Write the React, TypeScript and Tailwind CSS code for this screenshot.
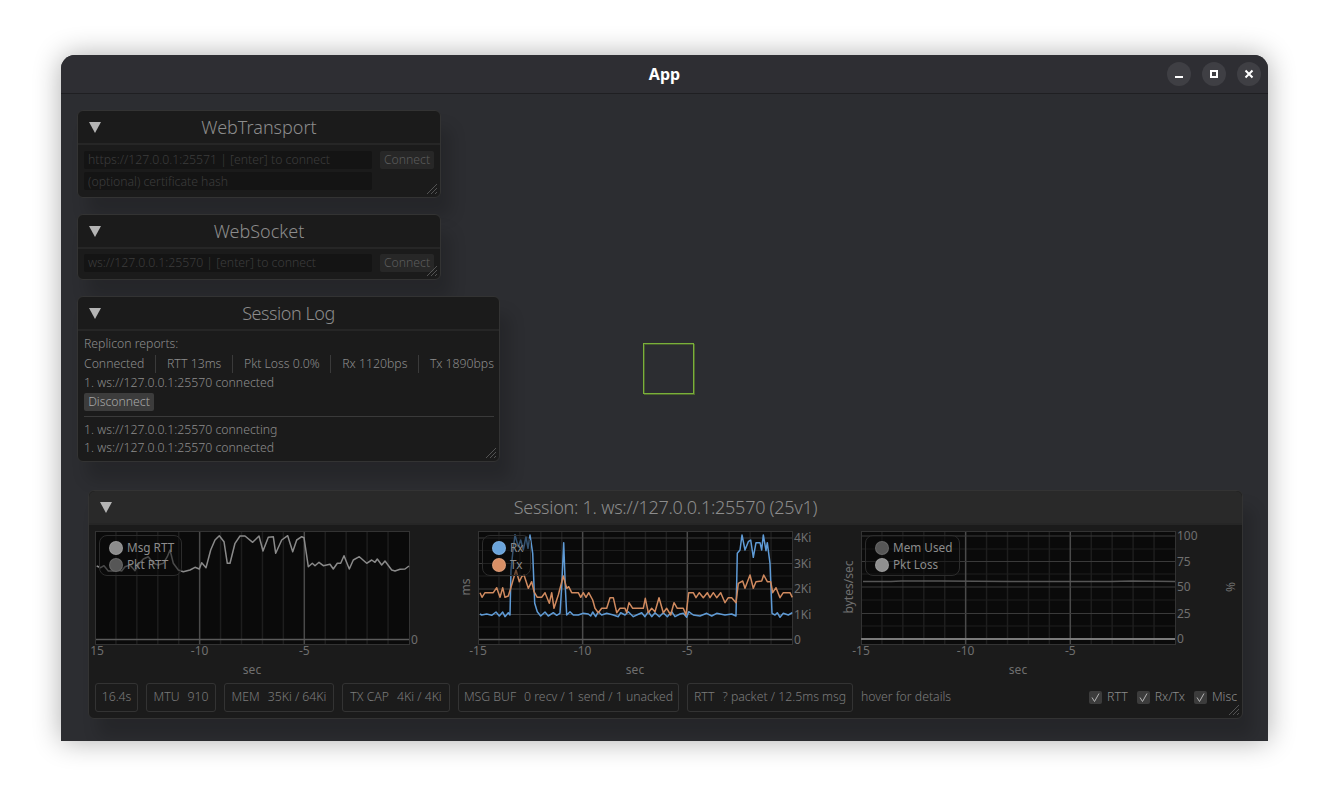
const FONT = 'font-["Noto_Sans",sans-serif]';

// traced from the reference, in 3x crop coordinates
const rttPts = '50,243 62,248 72,242 85,258 100,258 112,255 125,258 135,245 150,240 165,257 178,235 190,222 205,215 220,235 235,240 250,235 262,215 270,195 280,235 295,255 310,260 330,255 345,247 358,252 365,233 378,248 392,195 405,165 418,152 432,170 442,235 450,235 465,175 480,153 495,153 518,172 537,153 549,198 565,157 580,155 587,205 605,165 623,152 638,200 650,165 665,155 672,158 685,245 697,235 705,242 717,232 730,242 750,238 760,252 772,235 782,235 792,212 808,252 820,225 838,215 860,235 875,225 885,232 892,222 905,240 915,228 935,255 945,258 960,253 975,252 987,243';
const rxPts = '90,282 95,285 110,282 125,286 138,276 148,288 158,276 165,290 175,278 180,285 183,150 188,100 195,45 205,80 212,60 220,90 228,50 234,85 240,45 248,100 254,250 262,275 272,288 285,276 295,288 310,278 320,286 330,280 335,200 341,68 346,200 350,285 360,275 370,285 385,285 400,280 415,282 422,288 428,276 437,290 445,275 455,285 470,280 490,285 505,290 512,278 525,285 535,275 550,290 560,285 575,278 585,290 595,275 605,290 615,278 628,290 640,278 652,290 665,275 675,290 690,282 700,280 710,292 716,275 730,285 750,288 770,280 785,288 800,280 825,285 845,282 858,288 862,100 870,90 876,45 885,90 895,65 902,60 910,112 918,68 930,68 935,90 940,45 948,92 952,68 960,130 966,280 975,285 982,278 990,292 1000,280 1015,285 1027,278';
const txPts = '90,218 96,232 105,218 130,218 140,203 150,232 158,203 165,232 175,228 182,205 198,150 208,185 215,170 222,165 235,205 245,185 252,215 262,232 275,232 285,218 298,250 305,218 312,265 325,225 340,168 350,205 356,200 365,218 385,218 392,232 400,218 408,232 416,218 428,240 435,265 445,278 455,265 470,265 480,233 490,233 500,278 510,265 525,265 530,278 537,248 548,265 580,265 586,235 595,278 605,265 615,275 627,233 640,278 650,265 662,285 672,248 682,265 700,265 708,285 716,218 730,218 738,233 748,218 760,233 772,218 780,233 790,218 800,233 812,218 825,248 835,233 845,233 858,248 865,190 878,183 885,205 900,165 910,205 918,185 935,183 941,165 952,185 962,185 968,218 978,203 990,233 1000,218 1020,218 1027,232';

// crop coords -> chart-local coords
function mapPts(pts: string, cropX: number, cropY: number, plotX: number) {
  return pts.split(' ').map(p => {
    const [x, y] = p.split(',').map(Number);
    return `${(x / 3 + cropX - plotX).toFixed(1)},${(y / 3 + cropY - 531).toFixed(1)}`;
  }).join(' ');
}

const PLOT_W = 314;
const PLOT_H = 113;
const STEP = 20.93;
const minorX = [1, 2, 3, 4, 6, 7, 8, 9, 11, 12, 13, 14];

type Series = { points: string; color: string; width?: number };
type YTick = { label: string; y: number };

function Chart({ series, yTicks, minorY, firstTick, yLabel, yLabelX, rightLabel, legend, legendW }: {
  series: Series[];
  yTicks: YTick[];
  minorY: number[];
  firstTick: { label: string; x: number };
  yLabel?: string;
  yLabelX?: number;
  rightLabel?: string;
  legend: { label: string; color: string }[];
  legendW: string;
}) {
  return (
    <div className="relative w-[383px] h-[148px] shrink-0">
      <svg width="383" height="148" className="overflow-visible block" fontSize="12" fill="#6f6f6f">
        <rect x="0.5" y="0.5" width={PLOT_W} height={PLOT_H} fill="#0a0a0a" stroke="#333333" />
        {minorX.map(i => (
          <line key={i} x1={i * STEP} x2={i * STEP} y1="1" y2={PLOT_H} stroke="#1e1e1e" strokeWidth="1.5" />
        ))}
        {minorY.map(y => (
          <line key={y} x1="1" x2={PLOT_W} y1={y} y2={y} stroke="#1e1e1e" />
        ))}
        <line x1={5 * STEP} x2={5 * STEP} y1="1" y2={PLOT_H} stroke="#4a4a4a" strokeWidth="1.5" />
        <line x1={10 * STEP} x2={10 * STEP} y1="1" y2={PLOT_H} stroke="#4a4a4a" strokeWidth="1.5" />
        {yTicks.map(t => (
          <line key={t.label} x1="1" x2={PLOT_W} y1={t.y} y2={t.y} stroke={t.label === '0' ? '#5a5a5a' : '#3a3a3a'} strokeWidth={t.label === '0' ? 1.5 : 1} />
        ))}
        {series.map(s => (
          <polyline key={s.color + s.points.length} points={s.points} fill="none" stroke={s.color} strokeWidth={s.width ?? 1.5} strokeLinejoin="round" />
        ))}
        {yTicks.map(t => (
          <text key={t.label} x={PLOT_W + 2} y={t.y + 4}>{t.label}</text>
        ))}
        <text x={firstTick.x} y="124" textAnchor="middle">{firstTick.label}</text>
        <text x={5 * STEP} y="124" textAnchor="middle">-10</text>
        <text x={10 * STEP} y="124" textAnchor="middle">-5</text>
        <text x="157" y="143" textAnchor="middle">sec</text>
        {yLabel && (
          <text transform={`translate(${yLabelX} 56) rotate(-90)`} textAnchor="middle">{yLabel}</text>
        )}
        {rightLabel && (
          <text transform="translate(374 56) rotate(-90)" textAnchor="middle">{rightLabel}</text>
        )}
      </svg>
      <div className={`absolute left-[4px] top-[4px] h-[41px] ${legendW} rounded-lg border border-[#2c2c2c] bg-[#0a0a0a]/50 pl-[9px] pt-[3px] text-[11.75px] leading-[17px] text-[#8c8c8c]`}>
        {legend.map(l => (
          <div key={l.label} className="flex items-center gap-[4px] h-[17px] whitespace-nowrap">
            <span className="w-[14px] h-[14px] rounded-full border border-white/10" style={{ backgroundColor: l.color }} />
            {l.label}
          </div>
        ))}
      </div>
    </div>
  );
}

function Triangle() {
  return (
    <svg width="12" height="11" viewBox="0 0 12 11" className="block">
      <path d="M0 0H12L6 11Z" fill="#b4b4b4" />
    </svg>
  );
}

function ResizeGrip() {
  return (
    <svg width="12" height="12" viewBox="0 0 12 12" className="absolute right-[2px] bottom-[2px]" stroke="#5a5a5a" strokeWidth="0.9">
      <path d="M1 11L11 1M5 11L11 5M9 11L11 9" />
    </svg>
  );
}

function Panel({ title, width, children, light, titleClass = '' }: { title: string; width: string; children: React.ReactNode; light?: boolean; titleClass?: string }) {
  return (
    <div className={`relative ${width} rounded-md border border-[#333333] bg-[#1b1b1b] shadow-[10px_18px_16px_rgba(0,0,0,0.16)]`}>
      <div className={`grid grid-cols-[1fr_auto_1fr] items-center h-[34px] px-[11px] border-b-2 border-[#262626] rounded-t-md ${light ? 'bg-[#292929]' : ''}`}>
        <Triangle />
        <span className={`text-[18px] font-light text-[#8c8c8c] whitespace-nowrap ${titleClass}`}>{title}</span>
        <span />
      </div>
      {children}
      <ResizeGrip />
    </div>
  );
}

function ConnectRow({ placeholder }: { placeholder: string }) {
  return (
    <div className="flex gap-[8px] h-[18px]">
      <div className="w-[288px] h-full rounded-[2px] bg-[#141414] pl-[4px] text-[12.25px] leading-[18px] font-light text-[#3c3c3c] whitespace-nowrap">{placeholder}</div>
      <div className="w-[54px] h-full rounded-[2px] bg-[#272727] text-center text-[12.25px] leading-[18px] font-light text-[#5c5c5c]">Connect</div>
    </div>
  );
}

function Stat({ width, label, value }: { width: string; label?: string; value: string }) {
  return (
    <div className={`${width} h-[29px] flex items-center justify-center gap-[8px] rounded-[3px] border border-[#333333] text-[12.25px] font-light text-[#7c7c7c] whitespace-nowrap`}>
      {label && <span>{label}</span>}
      <span>{value}</span>
    </div>
  );
}

function Check({ label }: { label: string }) {
  return (
    <div className="flex items-center gap-[5px] text-[12.25px] font-light text-[#8c8c8c]">
      <span className="w-[13px] h-[13px] rounded-[2px] bg-[#3c3c3c] flex items-center justify-center">
        <svg width="11" height="11" viewBox="0 0 11 11" fill="none" stroke="#b4b4b4" strokeWidth="1">
          <path d="M2 5.5L4.5 9.5L9 1.5" />
        </svg>
      </span>
      {label}
    </div>
  );
}

function Sep() {
  return <span className="w-px h-[18px] bg-[#3a3a3a]" />;
}

export default function App() {
  const rtt = mapPts(rttPts, 80, 485, 95);
  const rx = mapPts(rxPts, 450, 520, 478);
  const tx = mapPts(txPts, 450, 520, 478);

  return (
    <div className={`${FONT} h-[808px] bg-white pl-[61px] pt-[55px] overflow-hidden`}>
      <div className="w-[1207px] h-[686px] rounded-t-[14px] bg-[#2c2d31] shadow-[0_0_28px_rgba(0,0,0,0.32)] overflow-hidden">
        {/* title bar */}
        <div className="relative h-[39px] flex items-center justify-center bg-[#2e2e33] border-b border-[#1f1f22]">
          <span className="text-[16px] font-bold text-white">App</span>
          <div className="absolute right-[7px] top-[7px] flex gap-[11px]">
            <button className="w-[24px] h-[24px] rounded-full bg-[#3f3f44] flex items-center justify-center">
              <span className="block w-[8px] h-[2px] mt-[6px] bg-white" />
            </button>
            <button className="w-[24px] h-[24px] rounded-full bg-[#3f3f44] flex items-center justify-center">
              <span className="block w-[8px] h-[8px] border-2 border-white" />
            </button>
            <button className="w-[24px] h-[24px] rounded-full bg-[#3f3f44] flex items-center justify-center">
              <svg width="10" height="10" viewBox="0 0 10 10" stroke="white" strokeWidth="2"><path d="M1.5 1.5L8.5 8.5M8.5 1.5L1.5 8.5" /></svg>
            </button>
          </div>
        </div>

        {/* canvas */}
        <div className="relative pl-[16px] pt-[16px] flex flex-col items-start">
          <Panel title="WebTransport" width="w-[364px] h-[88px]">
            <div className="flex flex-col gap-[3px] pl-[6px] pt-[6px]">
              <ConnectRow placeholder="https://127.0.0.1:25571 | [enter] to connect" />
              <div className="w-[288px] h-[18px] rounded-[2px] bg-[#141414] pl-[4px] text-[12.25px] leading-[19px] font-light text-[#3c3c3c]">(optional) certificate hash</div>
            </div>
          </Panel>

          <div className="mt-[16px]">
            <Panel title="WebSocket" width="w-[364px] h-[66px]">
              <div className="pl-[6px] pt-[5px]">
                <ConnectRow placeholder="ws://127.0.0.1:25570 | [enter] to connect" />
              </div>
            </Panel>
          </div>

          <div className="mt-[16px]">
            <Panel title="Session Log" titleClass="tracking-[-0.45px]" width="w-[423px] h-[166px]">
              <div className="pl-[6px] pr-[5px] pt-[4px] text-[12.25px] font-light leading-[18px] text-[#8c8c8c] whitespace-nowrap">
                <div className="h-[18px]">Replicon reports:</div>
                <div className="flex items-center justify-between h-[19px] mt-[1px]">
                  <span>Connected</span><Sep />
                  <span>RTT 13ms</span><Sep />
                  <span>Pkt Loss 0.0%</span><Sep />
                  <span>Rx 1120bps</span><Sep />
                  <span>Tx 1890bps</span>
                </div>
                <div className="h-[19px] leading-[19px]">1. ws://127.0.0.1:25570 connected</div>
                <div className="mt-[1px] w-[70px] h-[18px] rounded-[2px] bg-[#3c3c3c] text-center text-[#a8a8a8]">Disconnect</div>
                <div className="mt-[5px] h-px bg-[#3a3a3a]" />
                <div className="mt-[4px] h-[18px]">1. ws://127.0.0.1:25570 connecting</div>
                <div className="h-[18px]">1. ws://127.0.0.1:25570 connected</div>
              </div>
            </Panel>
          </div>

          <div className="mt-[28px] ml-[11px]">
            <Panel title="Session: 1. ws://127.0.0.1:25570 (25v1)" titleClass="tracking-[-0.26px]" width="w-[1155px] h-[229px]" light>
              <div className="flex pl-[6px] pt-[6px]">
                <Chart
                  series={[{ points: rtt, color: '#8a8a8a' }]}
                  yTicks={[{ label: '0', y: 108.5 }]}
                  minorY={[]}
                  firstTick={{ label: '15', x: 2 }}
                  legend={[{ label: 'Msg RTT', color: '#8c8c8c' }, { label: 'Pkt RTT', color: '#565656' }]}
                  legendW="w-[83px]"
                />
                <Chart
                  series={[{ points: rx, color: '#5f9bd6' }, { points: tx, color: '#d08a5f' }]}
                  yTicks={[{ label: '4Ki', y: 7 }, { label: '3Ki', y: 32.5 }, { label: '2Ki', y: 58 }, { label: '1Ki', y: 83.5 }, { label: '0', y: 108.5 }]}
                  minorY={[19.5, 45, 70.5, 96]}
                  firstTick={{ label: '-15', x: 0 }}
                  yLabel="ms"
                  yLabelX={-8}
                  legend={[{ label: 'Rx', color: '#6aa3da' }, { label: 'Tx', color: '#d98f66' }]}
                  legendW="w-[49px]"
                />
                <Chart
                  series={[{ points: '2,50.5 30,50.5 40,50 80,50 150,50.5 250,50.5 270,50 314,50.5', color: '#565656' }, { points: '0,108 314,108', color: '#8c8c8c' }]}
                  yTicks={[{ label: '100', y: 5 }, { label: '75', y: 30.5 }, { label: '50', y: 56 }, { label: '25', y: 82.5 }, { label: '0', y: 108 }]}
                  minorY={[18, 43, 69, 95]}
                  firstTick={{ label: '-15', x: 0 }}
                  yLabel="bytes/sec"
                  yLabelX={-8}
                  rightLabel="%"
                  legend={[{ label: 'Mem Used', color: '#565656' }, { label: 'Pkt Loss', color: '#8f8f8f' }]}
                  legendW="w-[95px]"
                />
              </div>
              <div className="flex items-center pl-[6px] pr-[5px] mt-[4px] gap-[8px]">
                <Stat width="w-[43px]" value="16.4s" />
                <Stat width="w-[70px]" label="MTU" value="910" />
                <Stat width="w-[110px]" label="MEM" value="35Ki / 64Ki" />
                <Stat width="w-[108px]" label="TX CAP" value="4Ki / 4Ki" />
                <Stat width="w-[221px]" label="MSG BUF" value="0 recv / 1 send / 1 unacked" />
                <Stat width="w-[166px]" label="RTT" value="? packet / 12.5ms msg" />
                <span className="text-[12.25px] font-light text-[#7c7c7c]">hover for details</span>
                <div className="ml-auto flex gap-[9px]">
                  <Check label="RTT" />
                  <Check label="Rx/Tx" />
                  <Check label="Misc" />
                </div>
              </div>
            </Panel>
          </div>

          {/* player square on the game canvas */}
          <div className="absolute left-[582px] top-[249px] w-[51px] h-[51px] border border-[#7ab03a] shadow-[1px_1px_0_rgba(110,160,40,0.5),inset_1px_1px_0_rgba(110,160,40,0.4)]" />
        </div>
      </div>
    </div>
  );
}
